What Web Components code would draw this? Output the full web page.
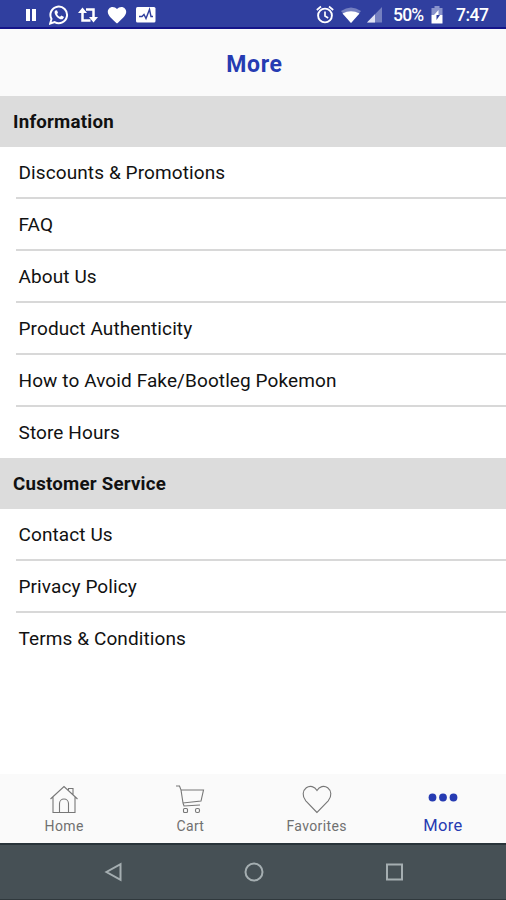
<!DOCTYPE html>
<html lang="en"><head><meta charset="utf-8"><title>More</title>
<style>
html,body{margin:0;height:100%;background:#fff}
body{font-family:Roboto,"Liberation Sans",sans-serif;color:#111;overflow:hidden}
</style></head><body>
<more-screen></more-screen>
<script>
const define=(name,html,init)=>customElements.define(name,class extends HTMLElement{
  constructor(){super();const t=document.createElement('template');t.innerHTML=html;
    this.attachShadow({mode:'open'}).append(t.content.cloneNode(true));}
  connectedCallback(){if(init)init(this,this.shadowRoot);}
});

define('status-bar',`<style>
:host{display:flex;box-sizing:border-box;height:29px;background:#303f9f;border-bottom:2px solid #15158a;color:#fff;align-items:center;padding:2px 18px 0 25px;font-size:17.5px;font-weight:500;line-height:20px}
svg{display:block;flex:none;width:20px;height:20px}
.left,.right{display:flex;align-items:center}.left{gap:9px}.right{margin-left:auto}
.pct{width:30px;margin-left:11px;white-space:nowrap;letter-spacing:-.8px}.time{width:32px;margin-left:13px;white-space:nowrap;letter-spacing:-.5px}
.pct,.time{padding-top:1px}
</style>
<div class="left">
<svg viewBox="0 0 12 20" style="width:12px;margin-right:3px"><path fill="#fff" d="M1 4h4v12H1zM7 4h4v12H7z"/></svg>
<svg viewBox="0 0 20 20"><path d="M1.2 18.5l1.3-4.6a8.3 8.3 0 1 1 3.2 3.2z" fill="none" stroke="#fff" stroke-width="2"/><path fill="#fff" d="M7.3 5.2L6 5.7c-2 3 3.500 9.300 7.500 8.600l1.400-1.700-.2-.9-2.400-1.100-1.200 1.200c-1.500-.6-2.500-1.600-3-2.900l.9-1.200-.9-2.300z"/></svg>
<svg viewBox="0 0 20 20"><path d="M4.500 5v10.500h8M8 4.500h7.500V15" fill="none" stroke="#fff" stroke-width="2.500"/><path fill="#fff" d="M0 8l4.500-5.500L9 8zM11 12h9l-4.500 5.500z"/></svg>
<svg viewBox="0 0 20 20"><path fill="#fff" d="M10 18.500l-1.500-1.300C3.500 12.600.8 10.100.8 6.800.8 4.200 2.900 2 5.600 2c1.700 0 3.300.8 4.400 2.100C11.100 2.800 12.700 2 14.400 2c2.700 0 4.800 2.200 4.800 4.800 0 3.300-2.700 5.800-7.700 10.400z"/></svg>
<svg viewBox="0 0 20 20"><rect y="2" width="19.500" height="15.500" rx="1.500" fill="#fff"/><path d="M3 11.500h3l2-2 2 4 3.500-9 1.500 7h2" fill="none" stroke="#303f9f" stroke-width="1.400"/></svg>
</div>
<div class="right">
<svg viewBox="0 0 18 20" style="width:18px"><circle cx="9" cy="10.500" r="6.900" fill="none" stroke="#fff" stroke-width="1.900"/><path d="M.8 5L5 1.500M17.200 5L13 1.500M9 6.500v4.500l3.200 2" fill="none" stroke="#fff" stroke-width="1.700"/></svg>
<svg viewBox="0 0 22 20" style="width:22px;margin-left:6px"><path fill="#7580c0" d="M1 6Q11-1 21 6L11 18z"/><path fill="#fff" d="M2.500 8.500Q11 4 19.500 8.500L11 18z"/></svg>
<svg viewBox="0 0 16 20" style="width:16px;margin-left:4px"><path fill="#7580c0" d="M16 2v15.500H1z"/><path fill="#dfe2f3" d="M9 9.300v8.200H1z"/></svg>
<span class="pct">50%</span>
<svg viewBox="0 0 12 20" style="width:12px;margin-left:8px"><path fill="#8993cc" d="M3.500 1h5v2H11.500v7H.5V3h3z"/><path fill="#fff" d="M.5 10h11v8.500H.5z"/><path fill="#fff" d="M7.500 5v5h-4.500z"/><path fill="#303f9f" d="M5.500 10h3.500l-3.500 5z"/></svg>
<span class="time">7:47</span>
</div>`);

define('title-bar',`<style>
:host{display:flex;box-sizing:border-box;height:67px;background:#fafafa;align-items:center;justify-content:center;color:#263bb2;font-size:23px;font-weight:700;padding:3px 0 0 3px;letter-spacing:.65px}
</style><slot></slot>`);

define('list-section',`<style>
:host{display:block}
h2{box-sizing:border-box;margin:0;height:51px;background:#dcdcdc;padding:0 13px;font-size:18.700px;font-weight:700;line-height:53px;letter-spacing:.22px}
</style><h2></h2><slot></slot>`,(el,r)=>{r.querySelector('h2').textContent=el.getAttribute('heading');});

define('list-row',`<style>
:host{display:block;box-sizing:border-box;height:52px;margin-left:16px;padding-left:2.500px;border-bottom:2px solid #d8d8d8;font-size:19px;line-height:52px;letter-spacing:.1px;white-space:nowrap}
:host(:last-of-type){border-bottom:0;height:51px}
</style><slot></slot>`);

const icons={
home:'<path d="M1.500 15L15 2.500 28.500 15M4 13v15.500h22V13M10.500 28v-8.500a4.500 4.500 0 0 1 9 0V28M19.500 6V4.500H24v6"/>',
cart:'<path d="M1 2h3.500L6 6h22.500l-2.500 11L8 19 6 6M8 19l1 3 16-1"/><rect x="8.500" y="24.500" width="4" height="4" rx="1"/><rect x="20.500" y="24.500" width="4" height="4" rx="1.500"/>',
heart:'<path d="M15 28.500L3.800 16.800C-.3 12 .8 6.500 4.300 3.800 8 1 12.700 2.500 15 6.500 17.300 2.500 22 1 25.700 3.800c3.500 2.700 4.600 8.200.5 13z"/>',
dots:'<g fill="#263bb2" stroke="none"><circle cx="4.500" cy="13.500" r="3.900"/><circle cx="15" cy="13.500" r="3.900"/><circle cx="25.500" cy="13.500" r="3.900"/></g>'};
define('tab-item',`<style>
:host{display:flex;flex:1;flex-direction:column;align-items:center;padding-top:10px;color:#707070;font-size:14px;line-height:18px;letter-spacing:.35px}
:host([active]){color:#263bb2;font-size:16.500px}
svg{width:30px;height:30px;margin-bottom:3px;fill:none;stroke:#777;stroke-width:1.100}
</style><svg viewBox="0 0 30 30"></svg><span><slot></slot></span>`,(el,r)=>{r.querySelector('svg').innerHTML=icons[el.getAttribute('icon')];});

define('tab-bar',`<style>:host{display:flex;box-sizing:border-box;height:69px;background:#fafafa;margin-top:auto;padding-left:1px}</style><slot></slot>`);

define('system-nav',`<style>
:host{display:flex;box-sizing:border-box;height:57px;background:#465055;border-top:2px solid #29343a;border-bottom:1px solid #30393d;justify-content:center;align-items:center;gap:121px;padding:0 0 0 1px}
svg{width:20px;height:20px;fill:none;stroke:#a5aeb1;stroke-width:2}
</style>
<svg viewBox="0 0 20 20"><path d="M17.500 2.200v15.600L3.500 10z"/></svg>
<svg viewBox="0 0 20 20"><circle cx="10" cy="10" r="8.500"/></svg>
<svg viewBox="0 0 20 20"><rect x="2" y="2.500" width="15" height="15"/></svg>`);

define('more-screen',`<style>:host{display:flex;flex-direction:column;width:506px;height:900px}</style>
<status-bar></status-bar><title-bar>More</title-bar>
<list-section heading="Information"><list-row>Discounts &amp; Promotions</list-row><list-row>FAQ</list-row><list-row>About Us</list-row><list-row>Product Authenticity</list-row><list-row>How to Avoid Fake/Bootleg Pokemon</list-row><list-row>Store Hours</list-row></list-section>
<list-section heading="Customer Service"><list-row>Contact Us</list-row><list-row>Privacy Policy</list-row><list-row>Terms &amp; Conditions</list-row></list-section>
<tab-bar><tab-item icon="home">Home</tab-item><tab-item icon="cart">Cart</tab-item><tab-item icon="heart">Favorites</tab-item><tab-item icon="dots" active>More</tab-item></tab-bar>
<system-nav></system-nav>`);
</script></body></html>
